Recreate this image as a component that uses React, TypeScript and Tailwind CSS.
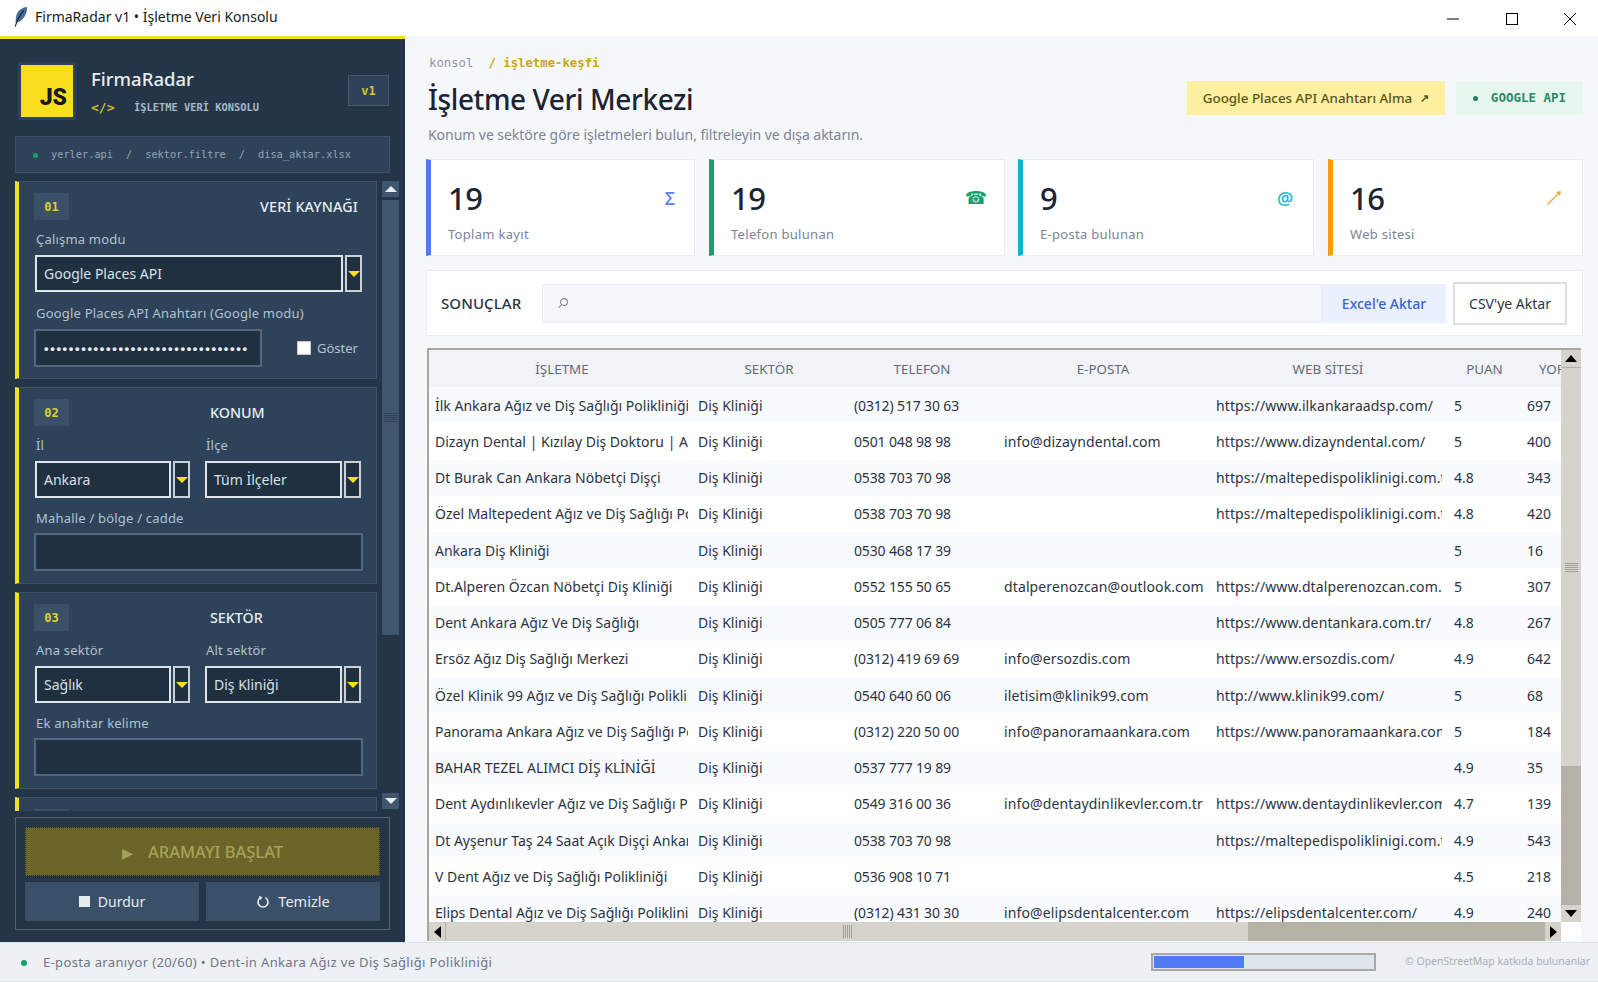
import type { ReactNode } from "react";

const ui = "font-['Noto_Sans',sans-serif]";
const mono = "font-['DejaVu_Sans_Mono',monospace]";

const rows = [
  ["İlk Ankara Ağız ve Diş Sağlığı Polikliniği", "(0312) 517 30 63", "", "https://www.ilkankaraadsp.com/", "5", "697"],
  ["Dizayn Dental | Kızılay Diş Doktoru | Ankara", "0501 048 98 98", "info@dizayndental.com", "https://www.dizayndental.com/", "5", "400"],
  ["Dt Burak Can Ankara Nöbetçi Dişçi", "0538 703 70 98", "", "https://maltepedispoliklinigi.com.tr/", "4.8", "343"],
  ["Özel Maltepedent Ağız ve Diş Sağlığı Polikliniği", "0538 703 70 98", "", "https://maltepedispoliklinigi.com.tr/", "4.8", "420"],
  ["Ankara Diş Kliniği", "0530 468 17 39", "", "", "5", "16"],
  ["Dt.Alperen Özcan Nöbetçi Diş Kliniği", "0552 155 50 65", "dtalperenozcan@outlook.com", "https://www.dtalperenozcan.com.tr/", "5", "307"],
  ["Dent Ankara Ağız Ve Diş Sağlığı", "0505 777 06 84", "", "https://www.dentankara.com.tr/", "4.8", "267"],
  ["Ersöz Ağız Diş Sağlığı Merkezi", "(0312) 419 69 69", "info@ersozdis.com", "https://www.ersozdis.com/", "4.9", "642"],
  ["Özel Klinik 99 Ağız ve Diş Sağlığı Polikliniği", "0540 640 60 06", "iletisim@klinik99.com", "http://www.klinik99.com/", "5", "68"],
  ["Panorama Ankara Ağız ve Diş Sağlığı Polikliniği", "(0312) 220 50 00", "info@panoramaankara.com", "https://www.panoramaankara.com/", "5", "184"],
  ["BAHAR TEZEL ALIMCI DİŞ KLİNİĞİ", "0537 777 19 89", "", "", "4.9", "35"],
  ["Dent Aydınlıkevler Ağız ve Diş Sağlığı Polikliniği", "0549 316 00 36", "info@dentaydinlikevler.com.tr", "https://www.dentaydinlikevler.com.tr/", "4.7", "139"],
  ["Dt Ayşenur Taş 24 Saat Açık Dişçi Ankara", "0538 703 70 98", "", "https://maltepedispoliklinigi.com.tr/", "4.9", "543"],
  ["V Dent Ağız ve Diş Sağlığı Polikliniği", "0536 908 10 71", "", "", "4.5", "218"],
  ["Elips Dental Ağız ve Diş Sağlığı Polikliniği", "(0312) 431 30 30", "info@elipsdentalcenter.com", "https://elipsdentalcenter.com/", "4.9", "240"],
];

function Label({ children, className = "" }: { children: ReactNode; className?: string }) {
  return <div className={`h-[18px] text-[13px] leading-[18px] tracking-[0.2px] text-[#b4c2d0] ${className}`}>{children}</div>;
}

function Combo({ value, width }: { value: string; width: string }) {
  return (
    <div className={`flex h-[37px] gap-[2px] ${width}`}>
      <div className="flex min-w-0 flex-1 items-center border-2 border-[#dfe4e9] bg-[#203040] pl-[7px] text-[14px] text-[#d8e0e8]">{value}</div>
      <div className="flex w-[17px] items-center justify-center border-2 border-[#c9d0d7] bg-[#203040]">
        <div className="h-0 w-0 border-x-[6px] border-t-[6px] border-x-transparent border-t-[#f7df1e]" />
      </div>
    </div>
  );
}

function Entry({ children, width }: { children?: ReactNode; width: string }) {
  return <div className={`flex h-[38px] items-center border-2 border-[#52677d] bg-[#203040] ${width}`}>{children}</div>;
}

function Section({ num, title, titleClass, children, h }: { num: string; title: string; titleClass: string; children: ReactNode; h: string }) {
  return (
    <section className={`shrink-0 border border-l-4 border-[#3c5268] border-l-[#f7df1e] bg-[#2e4359] pl-[15px] pt-[11px] ${h}`}>
      <div className="flex h-[27px] items-center">
        <div className={`flex h-[27px] w-[35px] items-center justify-center bg-[#3a5068] text-[12px] font-semibold text-[#dfd22a] ${mono}`}>{num}</div>
        <div className={`text-[14.3px] font-medium text-[#e8edf2] ${titleClass}`}>{title}</div>
      </div>
      {children}
    </section>
  );
}

function TwoCombos({ a, b, la, lb }: { a: string; b: string; la: string; lb: string }) {
  return (
    <>
      <div className="mt-[10px] flex pl-[2px]">
        <Label className="w-[170px]">{la}</Label>
        <Label>{lb}</Label>
      </div>
      <div className="ml-px mt-[7px] flex gap-[15px]">
        <Combo value={a} width="w-[155px]" />
        <Combo value={b} width="w-[156px]" />
      </div>
    </>
  );
}

function Sidebar() {
  return (
    <aside className="flex h-full w-[405px] shrink-0 flex-col border-t-[3px] border-[#f7df1e] bg-[#243547]">
      <div className="ml-[18px] mt-[23px] flex h-[58px] w-[371px]">
        <div className="h-[58px] w-[58px] border-[3px] border-[#2e4359] bg-[#f7df1e]">
          <div className="pr-[6px] pt-[18px] text-right text-[23px] font-black leading-[30px] text-[#1a1a1a] font-['Roboto',sans-serif]">JS</div>
        </div>
        <div className="ml-[15px] flex-1">
          <div className="mt-[4px] text-[18.5px] font-medium leading-[26px] text-[#e8edf2]">FirmaRadar</div>
          <div className="mt-[6px] flex items-center">
            <span className={`w-[43px] text-[13px] font-bold text-[#cdbf2c] ${mono}`}>&lt;/&gt;</span>
            <span className={`text-[10.4px] font-bold text-[#a9b8c7] ${mono}`}>İŞLETME VERİ KONSOLU</span>
          </div>
        </div>
        <div className={`mt-[13px] flex h-[31px] w-[41px] items-center justify-center border border-[#46596d] bg-[#2e4359] text-[12px] font-bold text-[#d6c52c] ${mono}`}>v1</div>
      </div>

      <div className={`ml-[15px] mt-[16px] flex h-[37px] w-[375px] items-center border border-[#3c5268] bg-[#2e4359] pl-[17px] text-[10.3px] text-[#93a5b7] ${mono}`}>
        <span className="mr-[13px] mt-[2px] h-[5px] w-[5px] rounded-full bg-[#10a36b]" />
        <span>yerler.api</span>
        <span className="mx-[13px]">/</span>
        <span>sektor.filtre</span>
        <span className="mx-[13px]">/</span>
        <span>disa_aktar.xlsx</span>
      </div>

      <div className="ml-[15px] mt-[8px] flex h-[630px]">
        <div className="flex w-[362px] flex-col gap-[8px] overflow-hidden">
          <Section num="01" title="VERİ KAYNAĞI" titleClass="ml-auto mr-[18px] tracking-[0.15px]" h="h-[198px]">
            <Label className="ml-[2px] mt-[10px]">Çalışma modu</Label>
            <div className="ml-px mt-[7px]"><Combo value="Google Places API" width="w-[327px]" /></div>
            <Label className="ml-[2px] mt-[12px]">Google Places API Anahtarı (Google modu)</Label>
            <div className="mt-[7px] flex items-center">
              <Entry width="w-[228px]">
                <span className="whitespace-nowrap pl-[8px] text-[13px] font-bold leading-none tracking-[1.65px] text-[#e8edf2] font-['Liberation_Sans',sans-serif]">{"•".repeat(33)}</span>
              </Entry>
              <div className="ml-[35px] h-[14px] w-[14px] border border-[#c8c8c8] bg-white" />
              <span className="ml-[6px] mt-px text-[13px] text-[#b4c2d0]">Göster</span>
            </div>
          </Section>
          <Section num="02" title="KONUM" titleClass="ml-[141px]" h="h-[197px]">
            <TwoCombos la="İl" lb="İlçe" a="Ankara" b="Tüm İlçeler" />
            <Label className="ml-[2px] mt-[11px]">Mahalle / bölge / cadde</Label>
            <div className="mt-[6px]"><Entry width="w-[329px]" /></div>
          </Section>
          <Section num="03" title="SEKTÖR" titleClass="ml-[141px]" h="h-[197px]">
            <TwoCombos la="Ana sektör" lb="Alt sektör" a="Sağlık" b="Diş Kliniği" />
            <Label className="ml-[2px] mt-[11px]">Ek anahtar kelime</Label>
            <div className="mt-[6px]"><Entry width="w-[329px]" /></div>
          </Section>
          <Section num="04" title="" titleClass="" h="h-[197px]"><div /></Section>
        </div>
        <div className="ml-[5px] flex w-[17px] flex-col">
          <div className="flex h-[16px] items-center justify-center bg-[#3f566e]">
            <div className="h-0 w-0 border-x-[6px] border-b-[6px] border-x-transparent border-b-[#e8edf2]" />
          </div>
          <div className="mt-[3px] flex h-[435px] flex-col items-center justify-center gap-[1px] bg-[#3f566e]">
            {[0, 1, 2, 3, 4].map((i) => <div key={i} className="h-px w-[13px] bg-[#2e4359]" />)}
          </div>
          <div className="flex-1" />
          <div className="mb-[2px] flex h-[16px] items-center justify-center bg-[#3f566e]">
            <div className="h-0 w-0 border-x-[6px] border-t-[6px] border-x-transparent border-t-[#e8edf2]" />
          </div>
        </div>
      </div>

      <div className="ml-[15px] mt-[6px] h-[113px] w-[375px] border border-[#56636e] px-[9px] pt-[9px]">
        <div className="flex h-[49px] items-center justify-center border border-dotted border-[#2a2a1a] bg-[#6b652a] pt-px text-[16.5px] font-medium text-[#a8a257]">
          <span className="mr-[15px] text-[14px]">▶</span>
          ARAMAYI BAŞLAT
        </div>
        <div className="mt-[6px] flex gap-[7px]">
          <button className="flex h-[39px] w-[174px] items-center justify-center bg-[#3a5068] text-[14px] text-[#e8edf2]">
            <span className="mr-[8px] h-[11px] w-[11px] bg-[#e8edf2]" />
            Durdur
          </button>
          <button className="flex h-[39px] w-[174px] items-center justify-center bg-[#3a5068] text-[14.5px] text-[#e8edf2]">
            <svg className="mr-[8px]" width="14" height="14" viewBox="0 0 14 14" fill="none" stroke="#e8edf2" strokeWidth="1.6">
              <path d="M4.6 2.6 A5 5 0 1 0 9.4 2.6" />
              <path d="M3 1.6 L5.4 2.4 L4.4 4.6" strokeWidth="1.2" />
            </svg>
            Temizle
          </button>
        </div>
      </div>
    </aside>
  );
}

function StatCard({ value, label, icon, bar, width }: { value: string; label: string; icon: ReactNode; bar: string; width: string }) {
  return (
    <div className={`flex h-[97px] border border-l-[5px] border-[#e9ecf2] bg-white pl-[17px] pr-[16px] ${bar} ${width}`}>
      <div className="flex-1">
        <div className="mt-[17px] text-[31px] font-medium leading-[42px] tracking-[-0.5px] text-[#1b2433]">{value}</div>
        <div className="mt-[6px] text-[13px] leading-[18px] tracking-[0.3px] text-[#7b8494]">{label}</div>
      </div>
      <div className="mt-[26px] flex h-[24px] w-[24px] items-center justify-center">{icon}</div>
    </div>
  );
}

function Header({ children, className = "" }: { children: ReactNode; className?: string }) {
  return <th className={`h-[37px] overflow-hidden whitespace-nowrap p-0 pt-px text-[13.4px] font-normal text-[#5f6b7a] ${className}`}>{children}</th>;
}

function Cell({ children, clip, track = "" }: { children: ReactNode; clip: string; track?: string }) {
  return (
    <td className={`p-0 align-middle ${clip}`}>
      <div className={`overflow-hidden whitespace-nowrap ${track}`}>{children}</div>
    </td>
  );
}

function Table() {
  return (
    <div className="ml-px mt-[12px] flex h-[593px] w-[1154px] border-l-2 border-t-2 border-[#aaa79f] bg-white">
      <div className="flex w-[1132px] flex-col">
        <div className="h-[572px] overflow-hidden">
          <table className="w-[1132px] table-fixed border-collapse text-[14px] text-[#2b3442]">
            <colgroup>
              <col className="w-[262px]" />
              <col className="w-[156px]" />
              <col className="w-[150px]" />
              <col className="w-[212px]" />
              <col className="w-[238px]" />
              <col className="w-[73px]" />
              <col className="w-[41px]" />
            </colgroup>
            <thead>
              <tr className="bg-[#f1f3f8]">
                <Header className="pl-[4px] text-center">İŞLETME</Header>
                <Header className="text-center">SEKTÖR</Header>
                <Header className="text-center">TELEFON</Header>
                <Header className="text-center">E-POSTA</Header>
                <Header className="text-center">WEB SİTESİ</Header>
                <Header className="pl-[2px] text-center">PUAN</Header>
                <Header className="pl-[19px] text-left">YORUM</Header>
              </tr>
            </thead>
            <tbody>
              {rows.map((r, i) => (
                <tr key={r[0]} className={`h-[36.25px] ${i % 2 === 0 ? "bg-[#fafbfe]" : "bg-white"}`}>
                  <Cell clip="pl-[6px] pr-[3px]">{r[0]}</Cell>
                  <Cell clip="pl-[7px] pr-[3px]">Diş Kliniği</Cell>
                  <Cell clip="pl-[7px] pr-[3px]" track="tracking-[-0.15px]">{r[1]}</Cell>
                  <Cell clip="pl-[7px]" track="tracking-[0.12px]">{r[2]}</Cell>
                  <Cell clip="pl-[7px] pr-[5px]" track="tracking-[0.12px]">{r[3]}</Cell>
                  <Cell clip="pl-[7px] pr-[3px]">{r[4]}</Cell>
                  <Cell clip="pl-[7px]">{r[5]}</Cell>
                </tr>
              ))}
            </tbody>
          </table>
        </div>
        <div className="flex h-[19px] bg-[#b6b1a6]">
          <div className="flex w-[16px] items-center justify-center bg-[#d6d3cc]">
            <div className="h-0 w-0 border-y-[6px] border-r-[7px] border-y-transparent border-r-black" />
          </div>
          <div className="ml-px flex w-[802px] items-center justify-center gap-[1px] bg-[#d6d3cc]">
            {[0, 1, 2, 3, 4].map((i) => <div key={i} className="h-[13px] w-px bg-[#a5a196]" />)}
          </div>
          <div className="flex-1" />
          <div className="flex w-[16px] items-center justify-center bg-[#d6d3cc]">
            <div className="h-0 w-0 border-y-[6px] border-l-[7px] border-y-transparent border-l-black" />
          </div>
        </div>
      </div>
      <div className="flex w-[20px] flex-col">
        <div className="flex h-[572px] flex-col bg-[#b6b1a6]">
          <div className="flex h-[17px] items-center justify-center bg-[#d6d3cc]">
            <div className="h-0 w-0 border-x-[6px] border-b-[7px] border-x-transparent border-b-black" />
          </div>
          <div className="mt-px flex h-[398px] flex-col items-center justify-center gap-[1px] bg-[#d6d3cc]">
            {[0, 1, 2, 3, 4].map((i) => <div key={i} className="h-px w-[13px] bg-[#a5a196]" />)}
          </div>
          <div className="flex-1" />
          <div className="flex h-[17px] items-center justify-center bg-[#d6d3cc]">
            <div className="h-0 w-0 border-x-[6px] border-t-[7px] border-x-transparent border-t-black" />
          </div>
        </div>
      </div>
    </div>
  );
}

function Main() {
  return (
    <main className="flex-1 bg-[#f5f7fb] pl-[21px] pt-[18px]">
      <div className="flex">
        <div className="w-[740px]">
          <div className={`ml-[3px] mt-px h-[15px] text-[12.3px] leading-[16px] ${mono}`}>
            <span className="text-[#8f96a3]">konsol</span>
            <span className="ml-[15px] font-semibold text-[#c9a80f]">/ işletme-keşfi</span>
          </div>
          <h1 className="ml-[2px] mt-[9px] text-[28px] font-medium leading-[40px] tracking-[-0.4px] text-[#1b2433]">İşletme Veri Merkezi</h1>
          <p className="ml-[2px] mt-[6px] text-[14px] leading-[20px] tracking-[-0.05px] text-[#7b8494]">Konum ve sektöre göre işletmeleri bulun, filtreleyin ve dışa aktarın.</p>
        </div>
        <div className="ml-[21px] mt-[27px] flex h-[34px]">
          <div className="flex w-[258px] items-center justify-center bg-[#fdf0a0] text-[13.4px] font-medium text-[#5c5418]">
            Google Places API Anahtarı Alma <span className="ml-[8px] text-[11px] font-bold">↗</span>
          </div>
          <div className={`ml-[11px] flex w-[127px] items-center justify-center bg-[#e8f6f0] pt-[1px] text-[12.5px] font-bold text-[#2a8a66] ${mono}`}>
            <span className="mr-[13px] h-[5px] w-[5px] rounded-full bg-[#17875a]" />
            GOOGLE API
          </div>
        </div>
      </div>

      <div className="mt-[14px] flex">
        <StatCard value="19" label="Toplam kayıt" bar="border-l-[#4f7bf7]" width="w-[269px]" icon={<span className="ml-[8px] text-[18px] font-medium text-[#5b7ff5]">Σ</span>} />
        <div className="ml-[14px]"><StatCard value="19" label="Telefon bulunan" bar="border-l-[#10a36b]" width="w-[296px]" icon={<span className="text-[18px] leading-none text-[#10a36b] font-['DejaVu_Sans',sans-serif]">☎</span>} /></div>
        <div className="ml-[13px]"><StatCard value="9" label="E-posta bulunan" bar="border-l-[#0fb3cf]" width="w-[296px]" icon={<span className="text-[18px] font-semibold text-[#2cb8d2]">@</span>} /></div>
        <div className="ml-[14px]"><StatCard value="16" label="Web sitesi" bar="border-l-[#f59e0b]" width="w-[255px]" icon={
          <svg width="16" height="16" viewBox="0 0 16 16" fill="none" stroke="#f5a524">
            <path d="M1.5 14.5 L14 2" strokeWidth="1.2" />
            <path d="M10.5 2.2 L14.5 1.5 L13.8 5.5" fill="#f5a524" strokeWidth="0.6" />
          </svg>
        } /></div>
      </div>

      <div className="mt-[14px] flex h-[66px] w-[1157px] items-center border border-[#e9ecf2] bg-white pl-[14px]">
        <div className="w-[101px] text-[15px] font-medium tracking-[0.1px] text-[#2b3442]">SONUÇLAR</div>
        <div className="flex h-[39px] w-[780px] items-center border border-[#e9ecf2] bg-[#f4f6fa] pl-[14px]">
          <svg width="12" height="12" viewBox="0 0 12 12" fill="none" stroke="#7b8494" strokeWidth="1.1">
            <circle cx="7" cy="5" r="3.4" />
            <path d="M4.6 7.6 L1.6 10.6" />
          </svg>
        </div>
        <div className="flex h-[39px] w-[124px] items-center justify-center bg-[#eaf0fd] text-[14px] font-medium text-[#3a62d0]">Excel'e Aktar</div>
        <div className="ml-[7px] flex h-[43px] w-[114px] items-center justify-center border-2 border-[#dcdfe4] bg-white text-[14px] text-[#2b3442]">CSV'ye Aktar</div>
      </div>

      <Table />
    </main>
  );
}

export default function App() {
  return (
    <div className={`flex h-[982px] w-[1598px] flex-col overflow-hidden bg-white ${ui}`}>
      <header className="flex h-[36px] shrink-0 items-center bg-white">
        <svg className="mb-[2px] ml-[13px]" width="16" height="22" viewBox="0 0 16 22">
          <path d="M14 1 C9 1 3.5 5 2.8 12 L2.6 17 L6.5 15.5 C11 13 14.5 7 14 1 Z" fill="#4a6c96" />
          <path d="M11 4.5 C7.5 8 4.5 13 2.2 20.5" stroke="#1d2733" strokeWidth="1.1" fill="none" />
        </svg>
        <span className="mb-[3px] ml-[6px] text-[14px] text-[#1a1a1a]">FirmaRadar v1 • İşletme Veri Konsolu</span>
        <div className="ml-auto flex items-center pt-[2px]">
          <svg width="12" height="12" viewBox="0 0 12 12" className="mr-[47px]"><path d="M0 6 H12" stroke="#000" /></svg>
          <svg width="12" height="12" viewBox="0 0 12 12" className="mr-[46px]"><rect x="0.5" y="0.5" width="11" height="11" fill="none" stroke="#000" /></svg>
          <svg width="12" height="12" viewBox="0 0 12 12" className="mr-[22px]"><path d="M0 0 L12 12 M12 0 L0 12" stroke="#000" /></svg>
        </div>
      </header>
      <div className="flex h-[906px] shrink-0">
        <Sidebar />
        <Main />
      </div>
      <footer className="flex h-[40px] shrink-0 items-center border-y border-[#dfe3ea] bg-[#edf0f5]">
        <span className="ml-[21px] mt-[2px] h-[6px] w-[6px] rounded-full bg-[#10a36b]" />
        <span className="ml-[16px] mt-[1px] w-[1108px] text-[13px] tracking-[0.35px] text-[#6f7683]">E-posta aranıyor (20/60) • Dent-in Ankara Ağız ve Diş Sağlığı Polikliniği</span>
        <div className="h-[18px] w-[225px] border-2 border-[#a9a9a5] bg-[#dfe5ee] p-px">
          <div className="h-full w-[90px] bg-[#4f7bf7]" />
        </div>
        <span className="ml-[29px] whitespace-nowrap text-[10.5px] text-[#a9afb9]">© OpenStreetMap katkıda bulunanlar</span>
      </footer>
    </div>
  );
}
